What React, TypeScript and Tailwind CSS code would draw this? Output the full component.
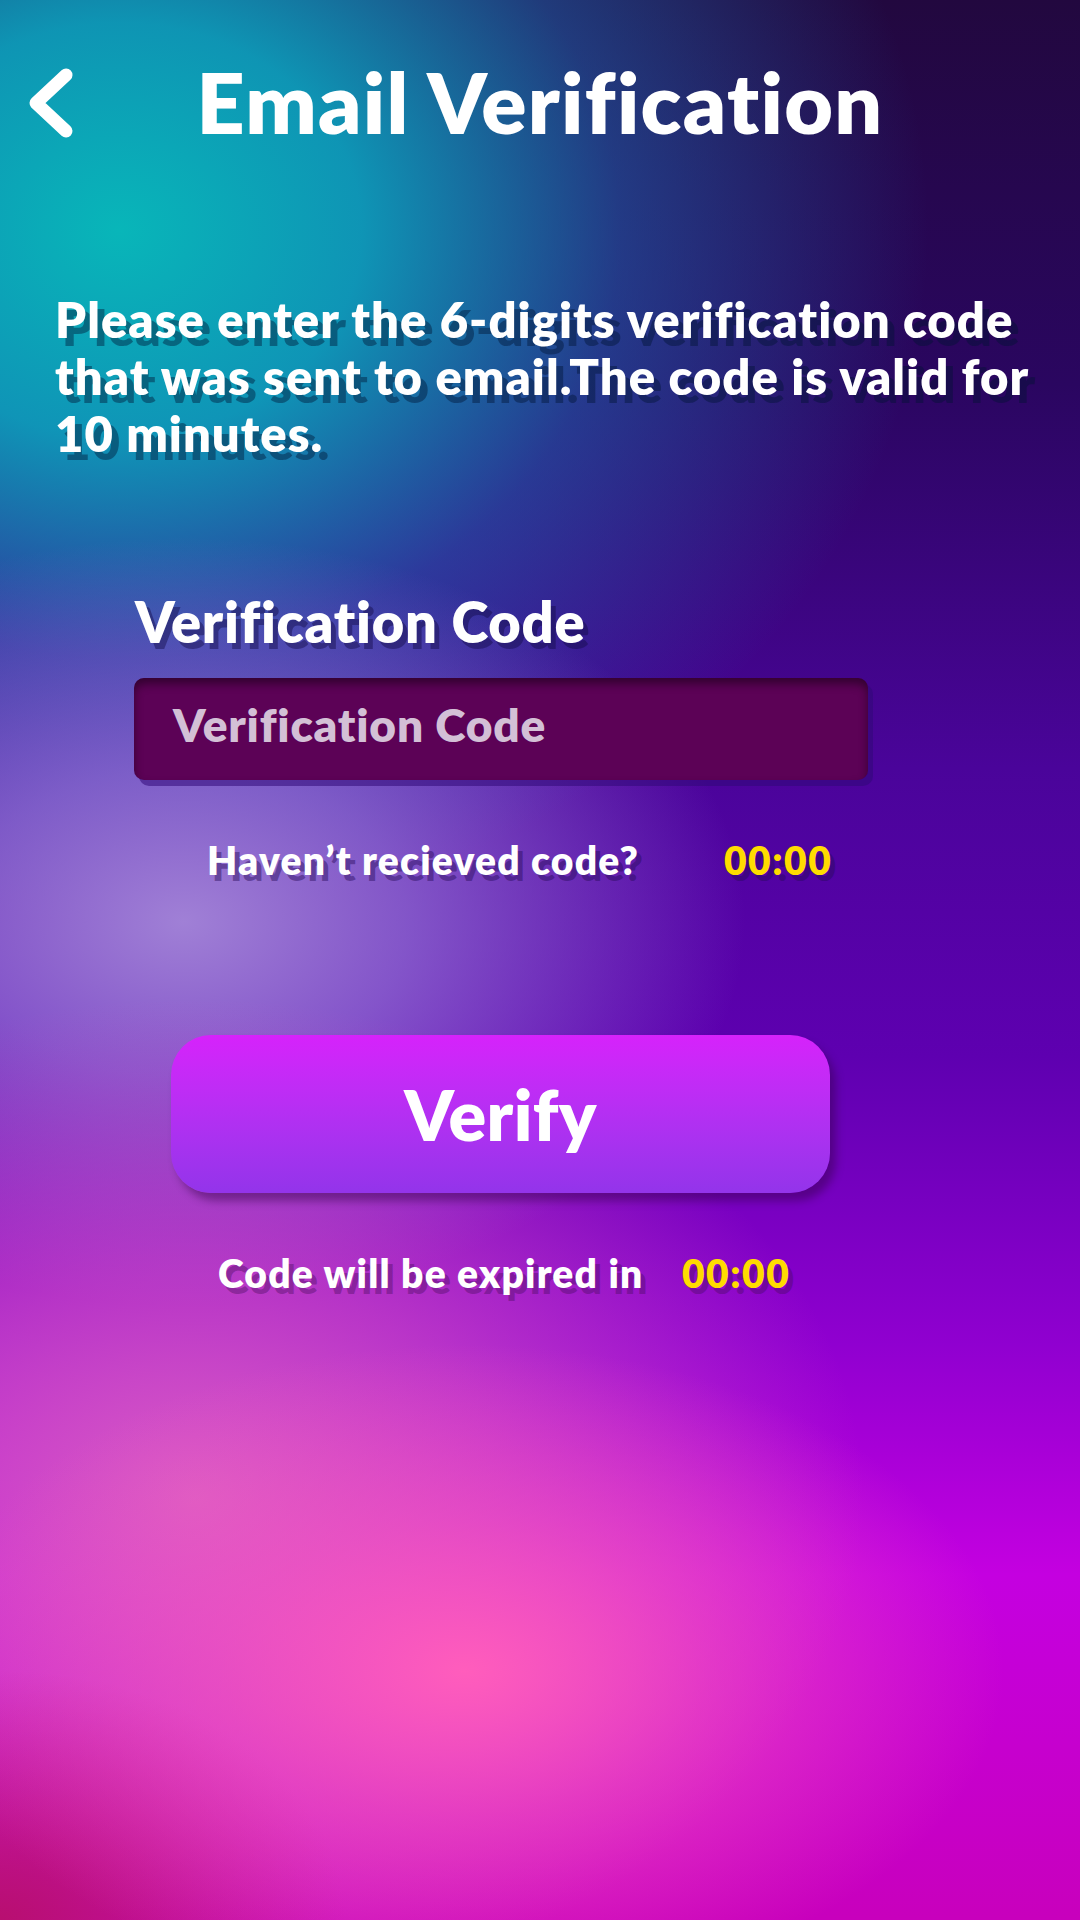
import React from 'react';

function BackChevron() {
  return (
    <svg width="52" height="80" viewBox="0 0 52 80" className="ml-[24px] mt-[4px] shrink-0">
      <path d="M42 11 L12 39 L42 67" fill="none" stroke="#ffffff" strokeWidth="13" strokeLinecap="round" strokeLinejoin="round" />
    </svg>
  );
}

export default function App() {
  return (
    <div className="w-[1080px] h-[1920px] overflow-hidden font-['Lato',sans-serif] font-extrabold text-white bg-[radial-gradient(ellipse_50%_17%_at_43%_87%,#ff5dbc_0%,rgba(250,90,190,0.55)_45%,rgba(240,80,190,0)_100%),radial-gradient(ellipse_32%_13%_at_0%_100%,#b80f70_0%,rgba(190,20,120,0)_100%),radial-gradient(ellipse_62%_26%_at_18%_78%,#d85cc4_0%,rgba(214,88,196,0.6)_45%,rgba(210,80,200,0)_100%),radial-gradient(ellipse_52%_20%_at_17%_48%,#a080d6_0%,rgba(150,120,215,0.7)_40%,rgba(120,100,210,0)_100%),radial-gradient(ellipse_75%_36%_at_11%_12%,#08b6b9_0%,rgba(12,164,192,0.9)_30%,rgba(30,120,195,0.45)_62%,rgba(40,90,190,0)_100%),linear-gradient(180deg,#22083f_0%,#2a0660_20%,#4a049a_40%,#5e00b0_55%,#9000d0_70%,#c400e0_82%,#c800bc_100%)]">
      {/* header */}
      <div className="flex items-start pt-[60px]">
        <BackChevron />
        <h1 className="flex-1 text-center text-[84px] leading-[84px] font-extrabold tracking-[1.3px]">Email Verification</h1>
        <div className="w-[76px] shrink-0" />
      </div>

      {/* intro */}
      <p className="mt-[147px] pl-[55px] text-[49px] leading-[57px] tracking-[1px] whitespace-nowrap [text-shadow:7px_8px_0_rgba(0,20,50,0.42)]">
        Please enter the 6-digits verification code
        <br />
        that was sent to email.The code is valid for
        <br />
        10 minutes.
      </p>

      {/* code field */}
      <div className="mt-[132px] ml-[135px] text-[56px] leading-[56px] tracking-[0.75px] [text-shadow:5px_6px_0_rgba(20,10,70,0.45)]">
        Verification Code
      </div>
      <div className="mt-[28px] ml-[134px] w-[734px] h-[102px] rounded-[10px] bg-[#5c0256] pl-[39px] pt-[24px] shadow-[inset_0_6px_8px_rgba(20,0,20,0.55),5px_6px_0_rgba(50,10,120,0.55)]">
        <span className="text-[46px] leading-[46px] tracking-[0.8px] text-[#d3c0d6]">Verification Code</span>
      </div>

      <div className="mt-[61px] pl-[207px] flex text-[39px] leading-[39px] tracking-[1.2px] [text-shadow:5px_6px_0_rgba(40,10,90,0.45)]">
        <span className="w-[517px] shrink-0">Haven’t recieved code?</span>
        <span className="text-[#ffdc00] tracking-[1.5px]">00:00</span>
      </div>

      {/* verify */}
      <button className="mt-[155px] ml-[171px] w-[659px] h-[158px] rounded-[40px] flex items-center justify-center bg-gradient-to-b from-[#d622fb] to-[#9334ea] shadow-[6px_8px_8px_rgba(50,0,70,0.45)]">
        <span className="text-[70px] leading-[70px] font-extrabold tracking-[0.4px] text-white">Verify</span>
      </button>

      <div className="mt-[61px] pl-[218px] flex text-[39px] leading-[39px] tracking-[1.2px] [text-shadow:5px_6px_0_rgba(70,10,90,0.4)]">
        <span className="w-[464px] shrink-0">Code will be expired in</span>
        <span className="text-[#ffdc00] tracking-[1.5px]">00:00</span>
      </div>
    </div>
  );
}
